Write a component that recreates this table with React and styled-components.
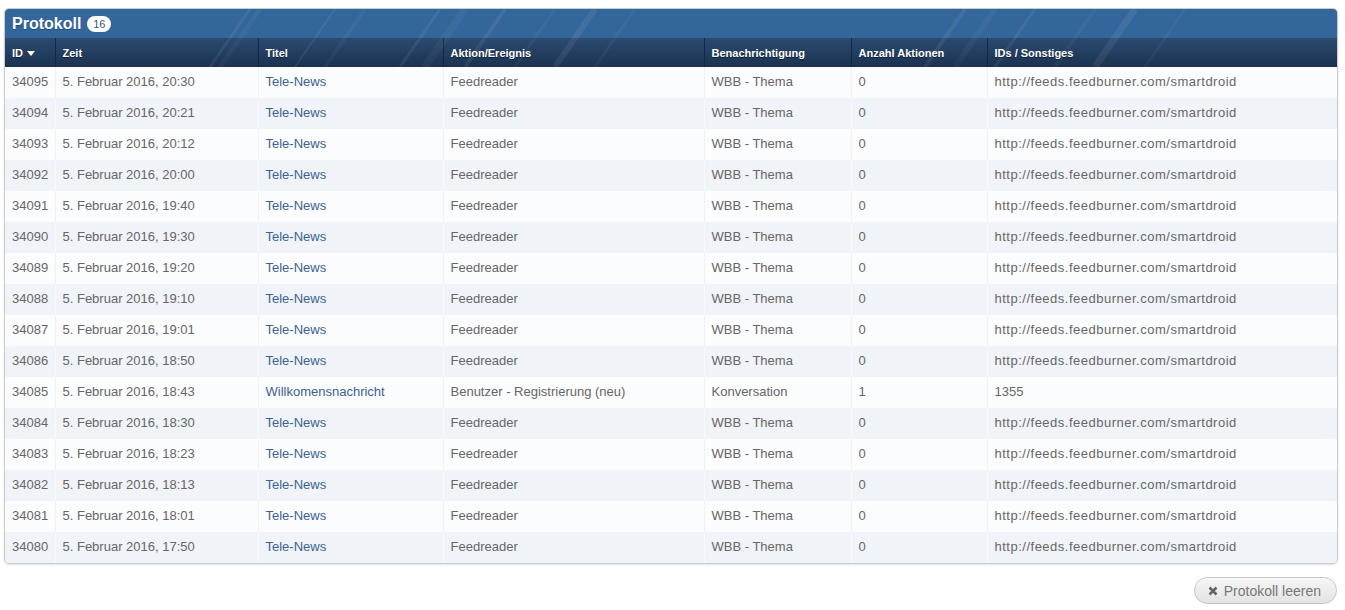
import styled, { createGlobalStyle } from "styled-components";

const GlobalStyle = createGlobalStyle`
  body {
    margin: 0;
    background: #fff;
    font-family: "Liberation Sans", Arial, sans-serif;
  }
`;

const rows = [
  ["34095", "5. Februar 2016, 20:30"],
  ["34094", "5. Februar 2016, 20:21"],
  ["34093", "5. Februar 2016, 20:12"],
  ["34092", "5. Februar 2016, 20:00"],
  ["34091", "5. Februar 2016, 19:40"],
  ["34090", "5. Februar 2016, 19:30"],
  ["34089", "5. Februar 2016, 19:20"],
  ["34088", "5. Februar 2016, 19:10"],
  ["34087", "5. Februar 2016, 19:01"],
  ["34086", "5. Februar 2016, 18:50"],
  ["34085", "5. Februar 2016, 18:43", true],
  ["34084", "5. Februar 2016, 18:30"],
  ["34083", "5. Februar 2016, 18:23"],
  ["34082", "5. Februar 2016, 18:13"],
  ["34081", "5. Februar 2016, 18:01"],
  ["34080", "5. Februar 2016, 17:50"],
];

const columns = [
  { label: "ID", width: 50 },
  { label: "Zeit", width: 203 },
  { label: "Titel", width: 185 },
  { label: "Aktion/Ereignis", width: 261 },
  { label: "Benachrichtigung", width: 147 },
  { label: "Anzahl Aktionen", width: 136 },
  { label: "IDs / Sonstiges" },
];

/* Page */

const Page = styled.div`
  padding: 8px 7px 0 4px;
`;

/* Box */

const Box = styled.section`
  position: relative;
  border: 1px solid #c8ccd2;
  border-radius: 5px;
  overflow: hidden;
  box-shadow: 0 1px 2px rgba(0, 0, 0, 0.12);
  background: #fff;
`;

const TitleBar = styled.header`
  display: flex;
  align-items: center;
  gap: 6px;
  height: 29px;
  padding: 0 7px;
  background: #33669a;
`;

const Title = styled.h2`
  margin: 0;
  font-size: 16px;
  font-weight: 700;
  color: #fff;
  text-shadow: 0 1px 0 rgba(0, 0, 0, 0.3);
`;

const Badge = styled.span`
  display: inline-flex;
  align-items: center;
  justify-content: center;
  min-width: 24px;
  height: 16px;
  padding: 0 3px;
  box-sizing: border-box;
  border-radius: 9px;
  background: #fff;
  color: #33557a;
  font-size: 11px;
  margin-top: 1px;
`;

const Stripes = styled.svg`
  position: absolute;
  left: 0;
  top: 0;
  pointer-events: none;
`;

/* Table */

const Table = styled.table`
  width: 100%;
  border-collapse: collapse;
  table-layout: fixed;
`;

const HeadCell = styled.th`
  height: 29px;
  padding: 0 7px;
  text-align: left;
  font-size: 11px;
  font-weight: 700;
  color: #fff;
  text-shadow: 0 1px 0 rgba(0, 0, 0, 0.5);
  background: linear-gradient(#2c4b70, #1a3250);
  border-left: 1px solid #15283f;
  white-space: nowrap;
  &:first-child {
    border-left: 0;
  }
`;

const SortArrow = styled.span`
  display: inline-block;
  width: 0;
  height: 0;
  margin-left: 4px;
  vertical-align: 1px;
  border-left: 4px solid transparent;
  border-right: 4px solid transparent;
  border-top: 5px solid #fff;
`;

const Row = styled.tr`
  background: ${props => (props.$alt ? "#f0f3f8" : "#fbfcfe")};
`;

const Cell = styled.td`
  height: 31px;
  padding: 0 7px 3px;
  box-sizing: border-box;
  font-size: 13px;
  color: #666;
  letter-spacing: ${props => (props.$wide ? "0.5px" : "0")};
  border-left: 1px solid ${props => (props.$alt ? "#f8f9fb" : "#eef1f5")};
  white-space: nowrap;
  &:first-child {
    border-left: 0;
  }
`;

const Link = styled.a`
  color: #3b6391;
  text-decoration: none;
`;

/* Footer */

const Footer = styled.div`
  display: flex;
  justify-content: flex-end;
  padding: 13px 1px 0 0;
`;

const Button = styled.button`
  display: inline-flex;
  align-items: center;
  gap: 6px;
  height: 27px;
  padding: 0 15px 0 13px;
  border: 1px solid #c2c2c2;
  border-radius: 14px;
  background: linear-gradient(#f6f6f6, #e3e3e3);
  color: #777;
  font-family: inherit;
  font-size: 14px;
  box-shadow: 0 1px 0 rgba(255, 255, 255, 0.8) inset;
`;

const CrossIcon = () => (
  <svg width="10" height="10" viewBox="0 0 10 10">
    <path d="M1.5 1.5 L8.5 8.5 M8.5 1.5 L1.5 8.5" stroke="#666" strokeWidth="2.6" strokeLinecap="butt" />
  </svg>
);

function HeaderStripes() {
  const lines = [
    [215, 3], [225, 5], [300, 2], [330, 4],
    [405, 3], [430, 8], [470, 4], [520, 3], [560, 6], [600, 3],
    [930, 4], [960, 6], [1000, 3], [1060, 4], [1100, 7], [1150, 3],
  ];
  return (
    <Stripes width="1334" height="58" viewBox="0 0 1334 58">
      {lines.map(([x, w], i) => (
        <line
          key={i}
          x1={x + 30}
          y1="0"
          x2={x - 10}
          y2="58"
          stroke="#fff"
          strokeOpacity={i % 2 ? 0.04 : 0.07}
          strokeWidth={w}
        />
      ))}
    </Stripes>
  );
}

export default function App() {
  return (
    <Page>
      <GlobalStyle />
      <Box>
        <TitleBar>
          <Title>Protokoll</Title>
          <Badge>16</Badge>
        </TitleBar>
        <Table>
          <colgroup>
            {columns.map(c => (
              <col key={c.label} style={c.width ? { width: c.width } : undefined} />
            ))}
          </colgroup>
          <thead>
            <tr>
              {columns.map((c, i) => (
                <HeadCell key={c.label}>
                  {c.label}
                  {i === 0 && <SortArrow />}
                </HeadCell>
              ))}
            </tr>
          </thead>
          <tbody>
            {rows.map(([id, time, special], i) => {
              const alt = i % 2 === 1;
              return (
                <Row key={id} $alt={alt}>
                  <Cell $alt={alt}>{id}</Cell>
                  <Cell $alt={alt}>{time}</Cell>
                  <Cell $alt={alt}>
                    <Link href="#">{special ? "Willkomensnachricht" : "Tele-News"}</Link>
                  </Cell>
                  <Cell $alt={alt}>{special ? "Benutzer - Registrierung (neu)" : "Feedreader"}</Cell>
                  <Cell $alt={alt}>{special ? "Konversation" : "WBB - Thema"}</Cell>
                  <Cell $alt={alt}>{special ? "1" : "0"}</Cell>
                  <Cell $alt={alt} $wide={!special}>
                    {special ? "1355" : "http://feeds.feedburner.com/smartdroid"}
                  </Cell>
                </Row>
              );
            })}
          </tbody>
        </Table>
        <HeaderStripes />
      </Box>
      <Footer>
        <Button>
          <CrossIcon />
          Protokoll leeren
        </Button>
      </Footer>
    </Page>
  );
}
